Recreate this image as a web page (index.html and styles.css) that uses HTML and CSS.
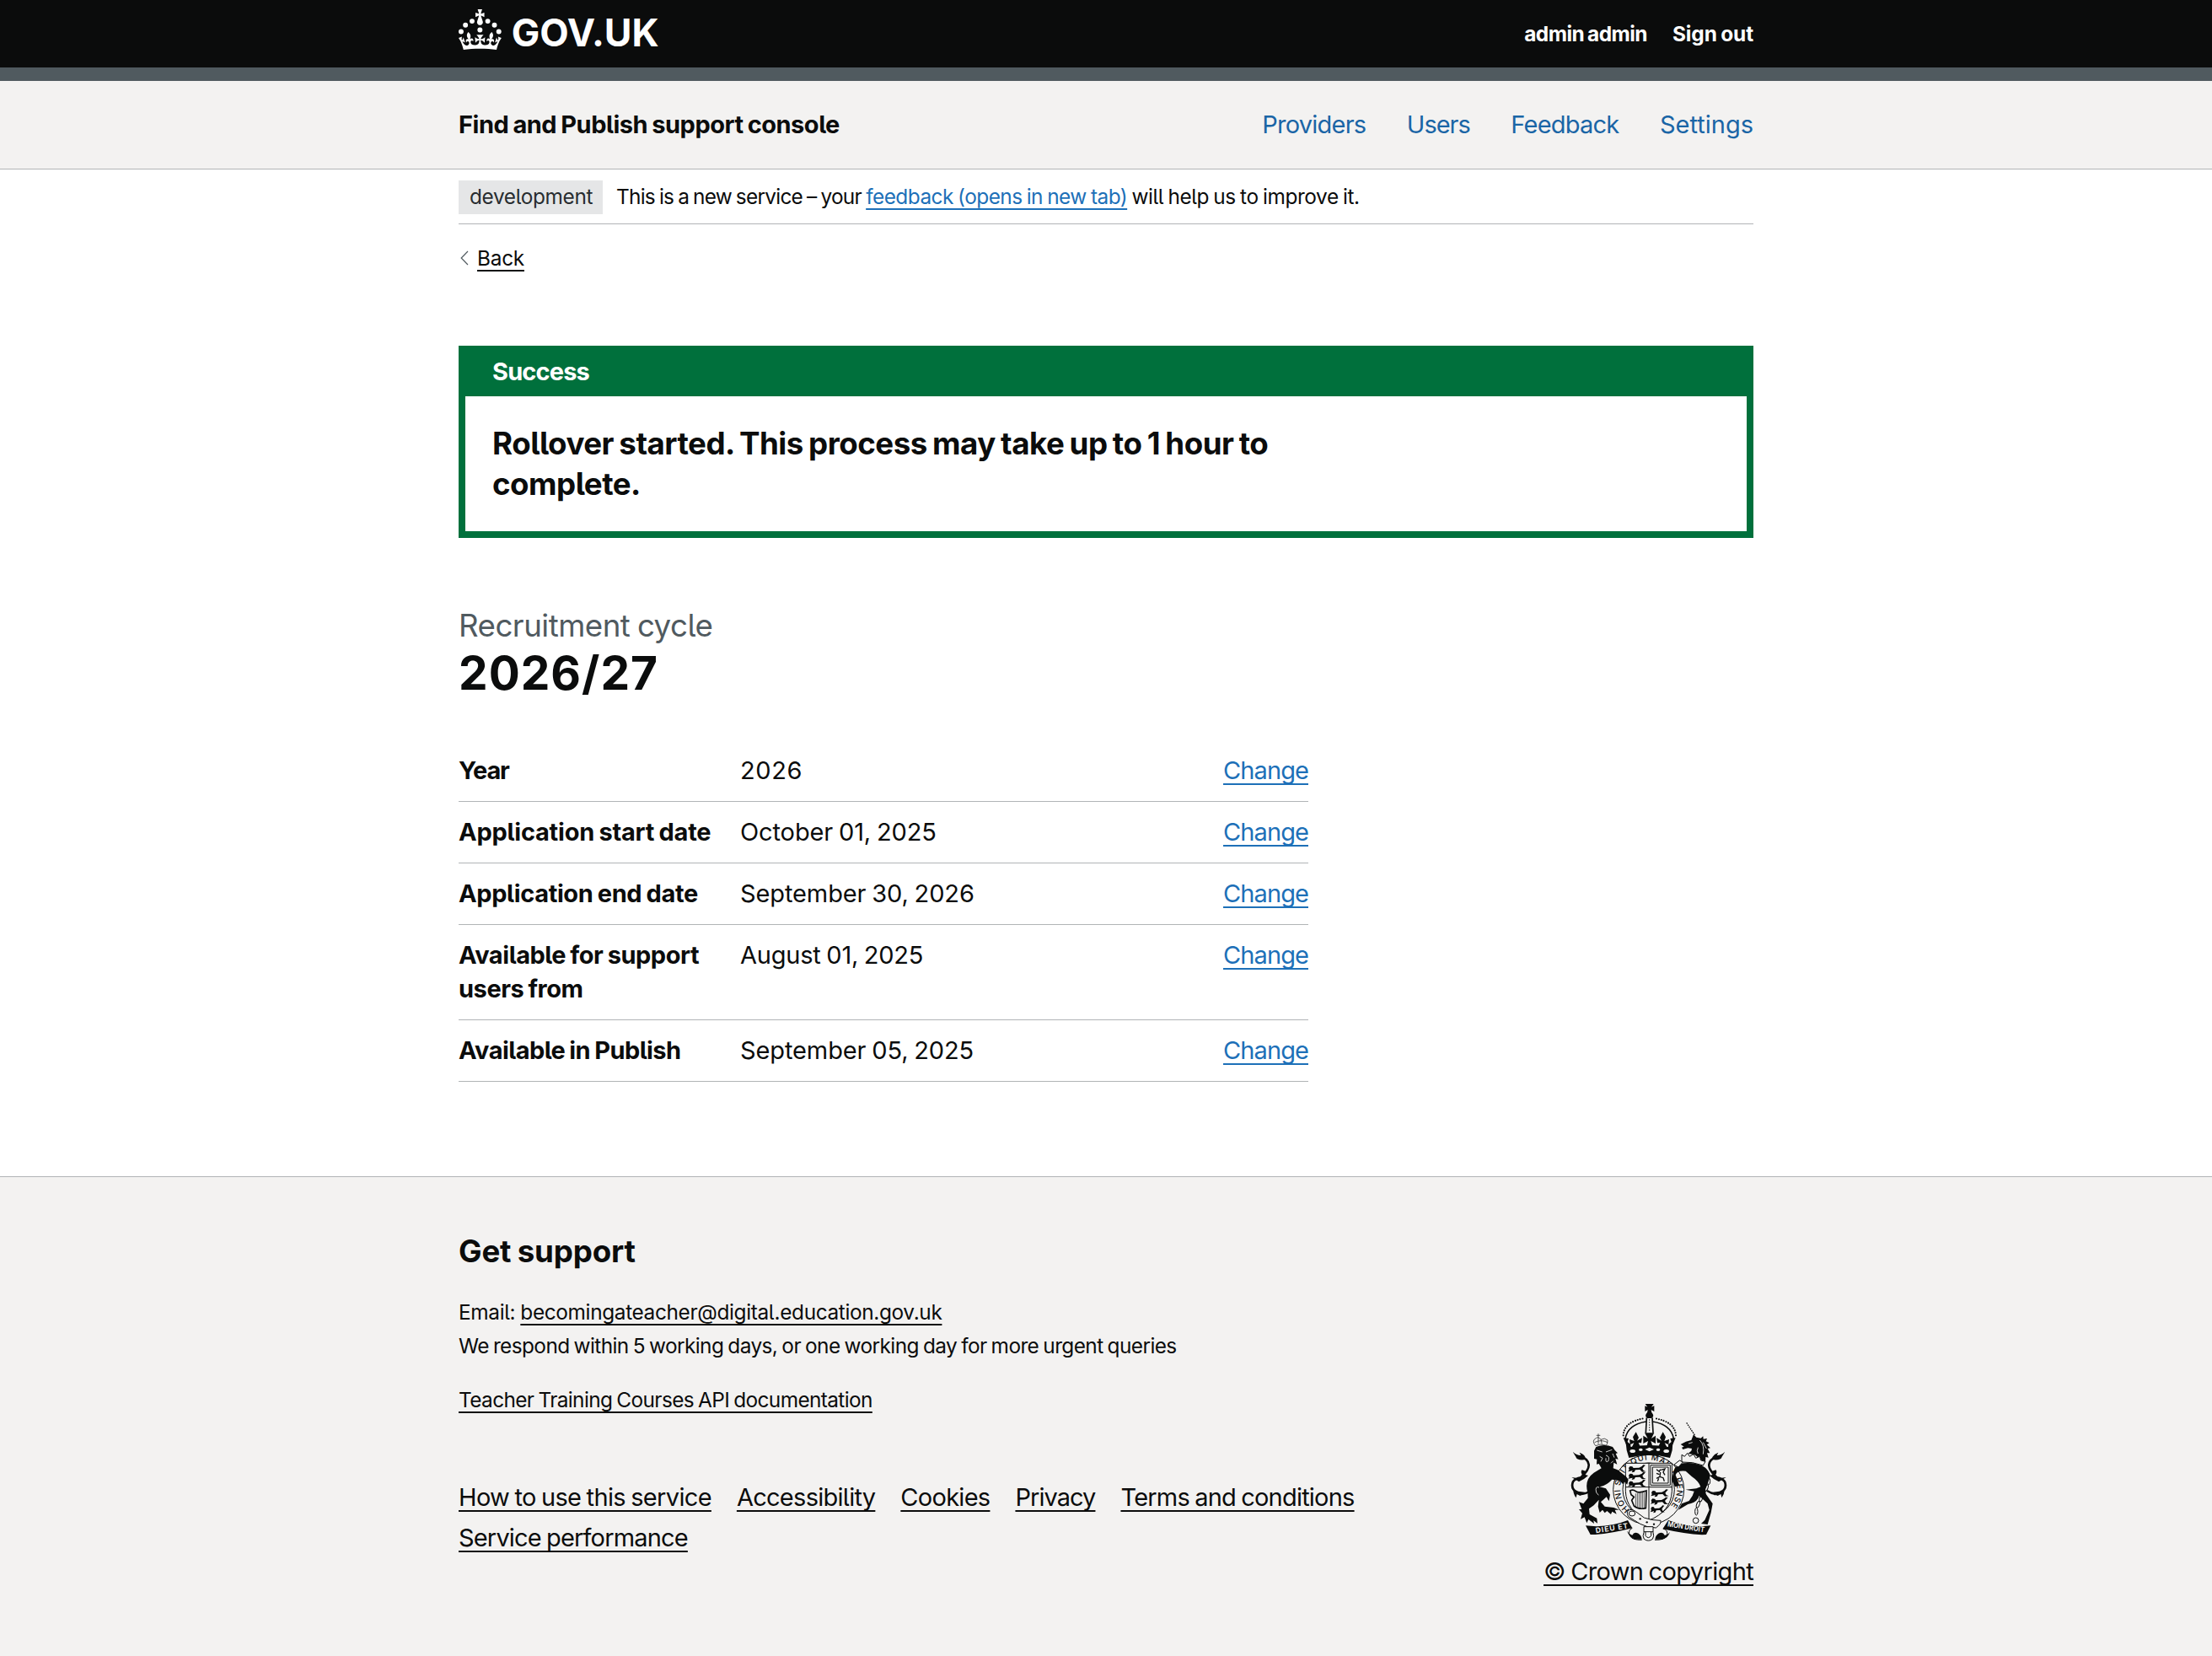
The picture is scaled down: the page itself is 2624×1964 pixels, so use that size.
FILE: index.html
```html
<!DOCTYPE html>
<html lang="en">
<head>
<meta charset="utf-8">
<title>Recruitment cycle 2026/27</title>
<link rel="stylesheet" href="styles.css">
</head>
<body>
<header class="header">
  <div class="container header-row">
    <a class="logo" href="#" aria-label="GOV.UK">
      <svg class="crown" viewBox="0 0 63.4 60" fill="currentColor" aria-hidden="true">
        <circle cx="20" cy="17.6" r="3.7"/><circle cx="10.2" cy="23.5" r="3.7"/><circle cx="3.7" cy="33.2" r="3.7"/><circle cx="31.7" cy="30.6" r="3.7"/><circle cx="43.3" cy="17.6" r="3.7"/><circle cx="53.2" cy="23.5" r="3.7"/><circle cx="59.7" cy="33.2" r="3.7"/>
        <path d="M33.1,9.8c.2-.1.3-.3.5-.5l4.6,2.4v-6.8l-4.6,1.5c-.1-.2-.3-.3-.5-.5l1.9-5.9h-6.7l1.9,5.9c-.2.1-.3.3-.5.5l-4.6-1.5v6.8l4.6-2.4c.1.2.3.3.5.5l-2.6,8c-.9,2.8,1.2,5.7,4.1,5.7h0c3,0,5.1-2.9,4.1-5.7l-2.6-8ZM37,37.9s-3.4,3.8-4.1,6.1c2.2,0,4.2-.5,6.4-2.8l-.7,8.5c-2-2.8-4.4-4.1-5.7-3.8.1,3.1.5,6.7,5.8,7.2,3.7.3,6.7-1.5,7-3.8.4-2.6-2-4.3-3.7-1.6-1.4-4.5,2.4-6.1,4.9-3.2-1.9-4.5-1.8-7.7,2.4-10.9,3,4,2.6,7.3-1.2,11.1,2.4-1.3,6.2,0,4,4.6-1.2-2.8-3.7-2.2-4.2.2-.3,1.7.7,3.7,3,4.2,1.9.3,4.7-.9,7-5.9-1.3,0-2.4.7-3.9,1.7l2.4-8c.6,2.3,1.4,3.7,2.2,4.5.6-1.6.5-2.8,0-5.3l5,1.8c-2.6,3.6-5.2,8.7-7.3,17.5-7.4-1.1-15.7-1.7-24.5-1.7h0c-8.8,0-17.1.6-24.5,1.7-2.1-8.9-4.7-13.9-7.3-17.5l5-1.8c-.5,2.5-.6,3.7,0,5.3.8-.8,1.6-2.3,2.2-4.5l2.4,8c-1.5-1-2.6-1.7-3.9-1.7,2.3,5,5.2,6.2,7,5.9,2.3-.4,3.3-2.4,3-4.2-.5-2.4-3-3.1-4.2-.2-2.2-4.6,1.6-6,4-4.6-3.7-3.7-4.2-7.1-1.2-11.1,4.2,3.2,4.3,6.4,2.4,10.9,2.5-2.8,6.3-1.3,4.9,3.2-1.8-2.7-4.1-1-3.7,1.6.3,2.3,3.3,4.1,7,3.8,5.4-.5,5.7-4.2,5.8-7.2-1.3-.2-3.7,1-5.7,3.8l-.7-8.5c2.2,2.3,4.2,2.7,6.4,2.8-.7-2.3-4.1-6.1-4.1-6.1h10.6Z"/>
      </svg>
      <span class="logo-text">GOV.UK</span>
    </a>
    <nav class="account"><a href="#" class="user">admin admin</a><a href="#">Sign out</a></nav>
  </div>
</header>
<div class="service">
  <div class="container service-row">
    <span class="service-name">Find and Publish support console</span>
    <nav class="service-nav"><a href="#">Providers</a><a href="#">Users</a><a href="#">Feedback</a><a href="#">Settings</a></nav>
  </div>
</div>
<div class="container">
  <div class="phase">
    <strong class="tag">development</strong>
    <span class="phase-text"><span class="phase-intro">This is a new service – your</span> <a href="#" class="phase-link">feedback (opens in new tab)</a> <span>will help us to improve it.</span></span>
  </div>
  <a class="back" href="#"><svg class="chevron" viewBox="0 0 10 18" aria-hidden="true"><path d="M9 1 1.2 9 9 17"/></svg><span>Back</span></a>
  <main class="main">
    <section class="banner">
      <h2 class="banner-title">Success</h2>
      <div class="banner-body"><p>Rollover started. This process may take up to 1 hour to complete.</p></div>
    </section>
    <h1 class="heading"><span class="caption">Recruitment cycle</span><span class="cycle">2026/27</span></h1>
    <dl class="summary">
      <div class="row year"><dt>Year</dt><dd>2026</dd><dd class="action"><a href="#">Change</a></dd></div>
      <div class="row start"><dt>Application start date</dt><dd>October 01, 2025</dd><dd class="action"><a href="#">Change</a></dd></div>
      <div class="row end"><dt>Application end date</dt><dd>September 30, 2026</dd><dd class="action"><a href="#">Change</a></dd></div>
      <div class="row support"><dt>Available for support users from</dt><dd>August 01, 2025</dd><dd class="action"><a href="#">Change</a></dd></div>
      <div class="row publish"><dt>Available in Publish</dt><dd>September 05, 2025</dd><dd class="action"><a href="#">Change</a></dd></div>
    </dl>
  </main>
</div>
<footer class="footer">
  <div class="container footer-row">
    <div class="footer-main">
      <h2 class="support-title">Get support</h2>
      <p class="small email">Email: <a href="#">becomingateacher@digital.education.gov.uk</a></p>
      <p class="small respond">We respond within 5 working days, or one working day for more urgent queries</p>
      <p class="small api"><a href="#">Teacher Training Courses API documentation</a></p>
      <ul class="links"><li><a href="#">How to use this service</a></li><li><a href="#">Accessibility</a></li><li><a href="#">Cookies</a></li><li><a href="#">Privacy</a></li><li><a href="#">Terms and conditions</a></li><li><a href="#">Service performance</a></li></ul>
    </div>
    <a class="copyright" href="#">
      <svg class="arms" viewBox="192 72 558 492" aria-hidden="true">
        <defs>
          <path id="motto" d="M403 451A101 101 0 1 1 537 451"/>
          <g id="passant"><path class="ink" d="M0 6l5-6 8 1 4 5 20-1 10-5 5-5 8 1-5 5-6 7 4 7 9 4-14 1-8-8-16 1-4 7-9 2 3-7-8 2-8 2 4-6z"/></g>
          <g id="tail"><path class="thick" d="M264 384Q236 402 217 392Q191 377 201 352Q209 340 229 337Q259 310 257 291Q253 267 226 264"/><path class="ink" d="M240 274Q214 276 211 263L200 245Q216 259 229 258L224 248Q246 256 246 272ZM238 334Q225 318 233 310L250 316L242 326L255 330L240 342L222 352L196 336L221 340ZM203 378Q200 394 212 409L215 396L226 402L248 390L220 386Z"/></g>
        </defs>
        <!-- supporters' tails -->
        <use href="#tail"/><use href="#tail" transform="translate(942 0) scale(-1 1)"/>
        <!-- garter and motto -->
        <ellipse class="paper line" cx="470" cy="380" rx="126" ry="124"/>
        <ellipse class="line" cx="470" cy="380" rx="92" ry="95"/>
        <text class="motto"><textPath href="#motto" textLength="470">HONI SOIT QUI MAL Y PENSE</textPath></text>
        <!-- shield -->
        <path class="paper line" d="M388 286H553V386Q550 458 470 490Q391 458 388 386Z"/>
        <path class="line" d="M471 286V488M388 371H553M477 293H547V364H477ZM484 300H540V357H484Z"/>
        <use href="#passant" x="399" y="297"/><use href="#passant" x="399" y="323"/><use href="#passant" x="399" y="350"/>
        <use href="#passant" x="480" y="384"/><use href="#passant" x="479" y="412"/><use href="#passant" transform="translate(478 441) scale(.8 1)"/>
        <path class="mid-line" d="M498 308l10 8 4-8M514 310l14-4-6 12 6 10M512 318l-2 16-12 6M510 334l12 4 4 12M506 340l-4 10M498 322l10 4"/>
        <path class="mid" d="M404 384Q415 378 424 386T462 384L460 446Q434 452 418 438L410 418L418 406L408 398Z"/>
        <path class="hair" d="M424 394V440M430 392V442M436 391V444M442 390V446M448 390V446M454 388V446"/>
        <!-- belt -->
        <path class="paper line" d="M398 454Q408 447 424 458L454 480Q480 490 513 490Q516 502 496 516Q466 516 440 502Q417 488 398 476Q390 462 398 454Z"/>
        <ellipse class="line" cx="411" cy="465" rx="11" ry="9"/>
        <g class="ink"><circle cx="440" cy="484" r="3.5"/><circle cx="464" cy="496" r="3.5"/><circle cx="489" cy="503" r="3.5"/></g>
        <path class="paper line" d="M453 512H486V532Q491 546 484 556Q469 567 454 556Q447 546 453 532Z"/>
        <path class="line" d="M459 530V544Q469 558 479 544V530M453 530H486"/>
        <!-- scroll -->
        <path class="ink" d="M246 508L284 511Q350 508 396 489L412 517Q340 536 280 540L263 540ZM691 508L656 511Q590 508 540 489L520 520Q600 538 660 541L675 540Z"/>
        <path class="ink" d="M412 542Q418 528 434 536Q445 544 446 557H420Q402 550 392 526Q402 540 412 542ZM527 542Q521 528 505 536Q494 544 493 557H518Q540 552 546 530Q538 542 527 542Z"/>
        <path class="line" d="M412 517Q394 524 404 545Q412 560 446 559M522 519Q542 524 534 545Q526 560 492 559"/>
        <text class="scroll" transform="translate(283 535) rotate(-9)" textLength="116">DIEU ET</text>
        <text class="scroll" transform="translate(536 511) rotate(9)" textLength="133" lengthAdjust="spacingAndGlyphs">MON DROIT</text>
        <!-- crown -->
        <path class="ink" d="M458 75H488L480 86L490 82V102L479 96Q479 104 485 111Q490 120 480 126H466Q456 120 461 111Q467 104 467 96L457 102V82L466 86Z"/>
        <path class="dots" d="M380 187Q382 138 457 126M567 187Q564 138 489 126"/>
        <path class="mid" d="M387 199Q395 149 461 138M559 199Q551 149 485 138M463 124L460 178M483 124L486 178"/>
        <path class="dots small-dots" d="M473 132V176"/>
        <path class="ink" d="M456 178H490L480 198L495 188V216L478 207L486 232H462L468 207L451 216V188L467 198ZM425 175L435 195L429 206L447 196L444 214L434 213L442 232L408 234L418 214L404 220L402 201L419 207L414 193ZM521 175L510 195L516 206L498 196L501 214L511 213L503 232L538 234L527 214L541 220L543 201L526 207L531 193ZM380 196L399 198L395 210L406 220V238L390 220ZM566 196L547 198L551 210L540 220V238L556 220Z"/>
        <path class="ink" d="M389 214L407 228Q473 216 539 228L556 214L554 240L546 267Q473 248 400 267L392 240Z"/>
        <g class="paper"><ellipse cx="413" cy="243" rx="10" ry="6"/><ellipse cx="442" cy="238" rx="7" ry="5"/><path d="M457 237L473 230 489 237 473 244Z"/><ellipse cx="504" cy="238" rx="7" ry="5"/><ellipse cx="533" cy="243" rx="10" ry="6"/></g>
        <!-- lion -->
        <path class="ink" d="M276 242L283 228Q312 216 342 228L350 240L360 250L353 252L362 272L352 270L358 290L346 284L344 304L360 310L390 334L398 344L394 362L382 350L380 362L368 349L340 344Q322 364 296 370L318 376L333 398L329 421L320 406L300 424L314 440L346 444L366 452L350 452L356 467L340 458L336 468L322 456L314 463L306 452L296 462L290 440L293 416L275 436L258 448L260 468L286 482L288 500L274 490L276 501L256 486L250 499L242 478L228 485L234 464L222 450L232 450L222 424L238 430L254 410L253 390Q240 345 275 320L302 304L293 288L285 290L286 272L276 270Z"/>
        <path class="cut" d="M286 240L305 246M318 246L340 238M296 262L306 268L300 280M318 258Q334 262 326 279Q316 286 318 268M342 252L348 266M336 286L344 278M294 372Q278 366 284 390L292 400"/>
        <path class="hair" d="M281 224Q266 205 283 197Q291 190 300 202Q314 194 324 204Q324 224 316 222Q299 215 281 224M291 181V194M284 187H298M291 194V218M300 202L304 218M278 212Q300 200 324 212"/>
        <!-- unicorn -->
        <path class="horn" d="M605 142L634 186"/>
        <path class="ink" d="M584 219L603 209L622 204L630 184L640 194L656 197L664 190L665 200L678 198L674 208L686 214L677 220L690 232L680 234L688 250L678 250L683 266L673 264L672 284L654 272L634 256L610 252L622 242L624 234L610 232L592 237L588 230L596 227Z"/>
        <path class="cut" d="M612 216L626 212M652 204Q670 222 664 254M664 212L676 234M646 230Q640 242 646 252"/>
        <path class="paper line" d="M588 256L598 262L608 250L616 262L630 254L638 268L652 262L656 276L672 280L664 294Q626 280 588 282Z"/>
        <path class="ink" d="M594 286Q642 282 672 302Q696 324 684 348L676 370Q666 388 681 406L698 430L692 462L680 504L657 501L670 488L686 452L680 430L650 402Q644 426 610 432L576 452L588 430L614 420L626 402L632 386L602 380L640 376L655 370Q648 350 624 334L602 314Q572 310 566 328L580 366L564 370L552 344L560 312Q566 292 594 286Z"/>
        <path class="paper line" d="M560 292L580 276L592 282L576 300Z"/>
        <g class="chain"><ellipse cx="678" cy="329" rx="10" ry="8"/><ellipse cx="684" cy="350" rx="5" ry="12"/><ellipse cx="676" cy="374" rx="5" ry="12" transform="rotate(20 676 374)"/><ellipse cx="664" cy="392" rx="5" ry="12" transform="rotate(30 664 392)"/><ellipse cx="656" cy="412" rx="5" ry="11" transform="rotate(15 656 412)"/><ellipse cx="646" cy="433" rx="5" ry="12" transform="rotate(20 646 433)"/><ellipse cx="640" cy="458" rx="5" ry="13"/><circle cx="638" cy="490" r="10"/></g>
      </svg>
      <span>© Crown copyright</span>
    </a>
  </div>
</footer>
</body>
</html>
```
FILE: styles.css
```css
* { box-sizing: border-box; }
body { margin: 0; background: #fff; color: #0b0c0c; font: 400 29px/40px Inter, "Liberation Sans", sans-serif; font-feature-settings: "cv05" 1; word-spacing: -1.2px; }
h1, h2, p, dl, dd, ul { margin: 0; padding: 0; }
a { color: #1d70b8; text-decoration: underline 2px; text-underline-offset: 5px; text-decoration-skip-ink: none; }
.container { width: 1536px; margin: 0 auto; }

.header { height: 96px; background: #0b0c0c; border-bottom: 16px solid #505a5f; }
.header-row { display: flex; justify-content: space-between; }
.header a { color: #fff; text-decoration: none; }
.logo { display: flex; gap: 12px; }
.crown { width: 50.7px; height: 48px; margin-top: 11px; }
.logo-text { font-size: 44.7px; line-height: 79px; font-weight: 700; }
.account { display: flex; gap: 30px; font-size: 24.4px; line-height: 80px; font-weight: 700; letter-spacing: -.1px; }
.account .user { letter-spacing: -.55px; }

.service { height: 105px; background: #f3f2f1; border-bottom: 1px solid #b1b4b6; line-height: 103px; }
.service-row { display: flex; justify-content: space-between; }
.service-name { font-weight: 700; letter-spacing: -.49px; }
.service-nav { display: flex; gap: 48.5px; letter-spacing: -.78px; }
.service-nav a { color: #1a65a6; text-decoration: none; }
.service-nav a:nth-child(2) { letter-spacing: -1px; }
.service-nav a:last-child { letter-spacing: 0; }

.phase { display: flex; align-items: center; gap: 16px; height: 65px; padding-top: 2px; border-bottom: 1px solid #b1b4b6; font-size: 24.4px; letter-spacing: -.4px; }
.tag { width: 171px; padding: 0 0 1px 13px; background: #e5e6e7; color: #282d30; font-weight: 400; line-height: 39px; letter-spacing: -.35px; }
.phase-text { margin-top: -2px; }
.phase-intro { letter-spacing: -.74px; }
.phase-link { letter-spacing: -.52px; }

.back { display: flex; width: max-content; margin-top: 20px; padding-left: 2px; gap: 10px; color: #0b0c0c; font-size: 24.4px; letter-spacing: -.25px; }
.chevron { width: 10px; height: 18px; margin-top: 11px; fill: none; stroke: #505a5f; stroke-width: 1.2; }

.main { padding-top: 84px; }
.banner { border: 8px solid #00703c; border-top: 0; }
.banner-title { height: 60px; padding: 10px 32px; background: #00703c; color: #fff; font-size: 29px; line-height: 41px; letter-spacing: -.85px; }
.banner-body { padding: 32px; font-weight: 700; font-size: 36.7px; line-height: 48px; letter-spacing: -.5px; word-spacing: -1.9px; }
.banner-body p { width: 960px; }

.heading { margin-top: 80px; font-weight: 400; }
.caption { display: block; color: #505a5f; font-size: 36.7px; line-height: 48px; letter-spacing: -.52px; }
.cycle { display: block; font-weight: 700; font-size: 55px; line-height: 64px; letter-spacing: 1px; }

.summary { width: 1008px; margin-top: 48px; }
.row { display: grid; grid-template-columns: 334px 1fr auto; padding: 16px 0; border-bottom: 1px solid #b1b4b6; letter-spacing: -.11px; }
.row dt { padding-right: 20px; font-weight: 700; }
.row .action { letter-spacing: -.91px; }
.year { letter-spacing: .6px; }
.year dt { letter-spacing: -1.1px; }
.start dt { padding-right: 0; letter-spacing: -.23px; }
.end dt { letter-spacing: -.37px; }
.support { letter-spacing: -.22px; }
.support dt { letter-spacing: -.46px; }
.publish dt { letter-spacing: -.56px; }

.footer { margin-top: 112px; min-height: 569px; border-top: 1px solid #b1b4b6; background: #f3f2f1; }
.footer a { color: #0b0c0c; }
.footer-row { display: flex; justify-content: space-between; align-items: flex-end; padding-top: 64px; }
.support-title { margin-bottom: 28px; font-size: 36.7px; line-height: 48px; letter-spacing: -.15px; }
.small { font-size: 24.4px; letter-spacing: -.36px; }
.small.email { word-spacing: -.4px; }
.respond { letter-spacing: -.59px; }
.api { margin-top: 24px; letter-spacing: -.62px; }
.links { display: flex; flex-wrap: wrap; gap: 8px 30px; width: 1120px; margin-top: 76px; padding-bottom: 40px; list-style: none; letter-spacing: -.72px; }
.links li:first-child { letter-spacing: -.67px; }
.links li:nth-child(4) { letter-spacing: -.95px; }
.links li:nth-child(5) { letter-spacing: -.78px; }
.links li:last-child { letter-spacing: -.83px; }
.copyright { display: flex; flex-direction: column; align-items: center; gap: 16px; letter-spacing: -.65px; }

.arms { width: 186px; height: 164px; fill: none; letter-spacing: 0; word-spacing: 0; }
.ink { fill: #0b0c0c; }
.paper { fill: #f3f2f1; }
.line { stroke: #0b0c0c; stroke-width: 3; }
.hair { stroke: #0b0c0c; stroke-width: 2; }
.mid { stroke: #0b0c0c; stroke-width: 5; }
.mid-line { stroke: #0b0c0c; stroke-width: 4; }
.thick { stroke: #0b0c0c; stroke-width: 8; }
.cut { stroke: #f3f2f1; stroke-width: 2.5; }
.dots { stroke: #0b0c0c; stroke-width: 6.5; stroke-linecap: round; stroke-dasharray: 0 9; }
.small-dots { stroke-width: 4; }
.horn { stroke: #0b0c0c; stroke-width: 4; stroke-dasharray: 5 3; }
.chain { stroke: #0b0c0c; stroke-width: 3; }
.motto { fill: #0b0c0c; font-size: 29px; font-weight: 500; }
.scroll { fill: #f3f2f1; font-size: 26px; font-weight: 700; }
```
